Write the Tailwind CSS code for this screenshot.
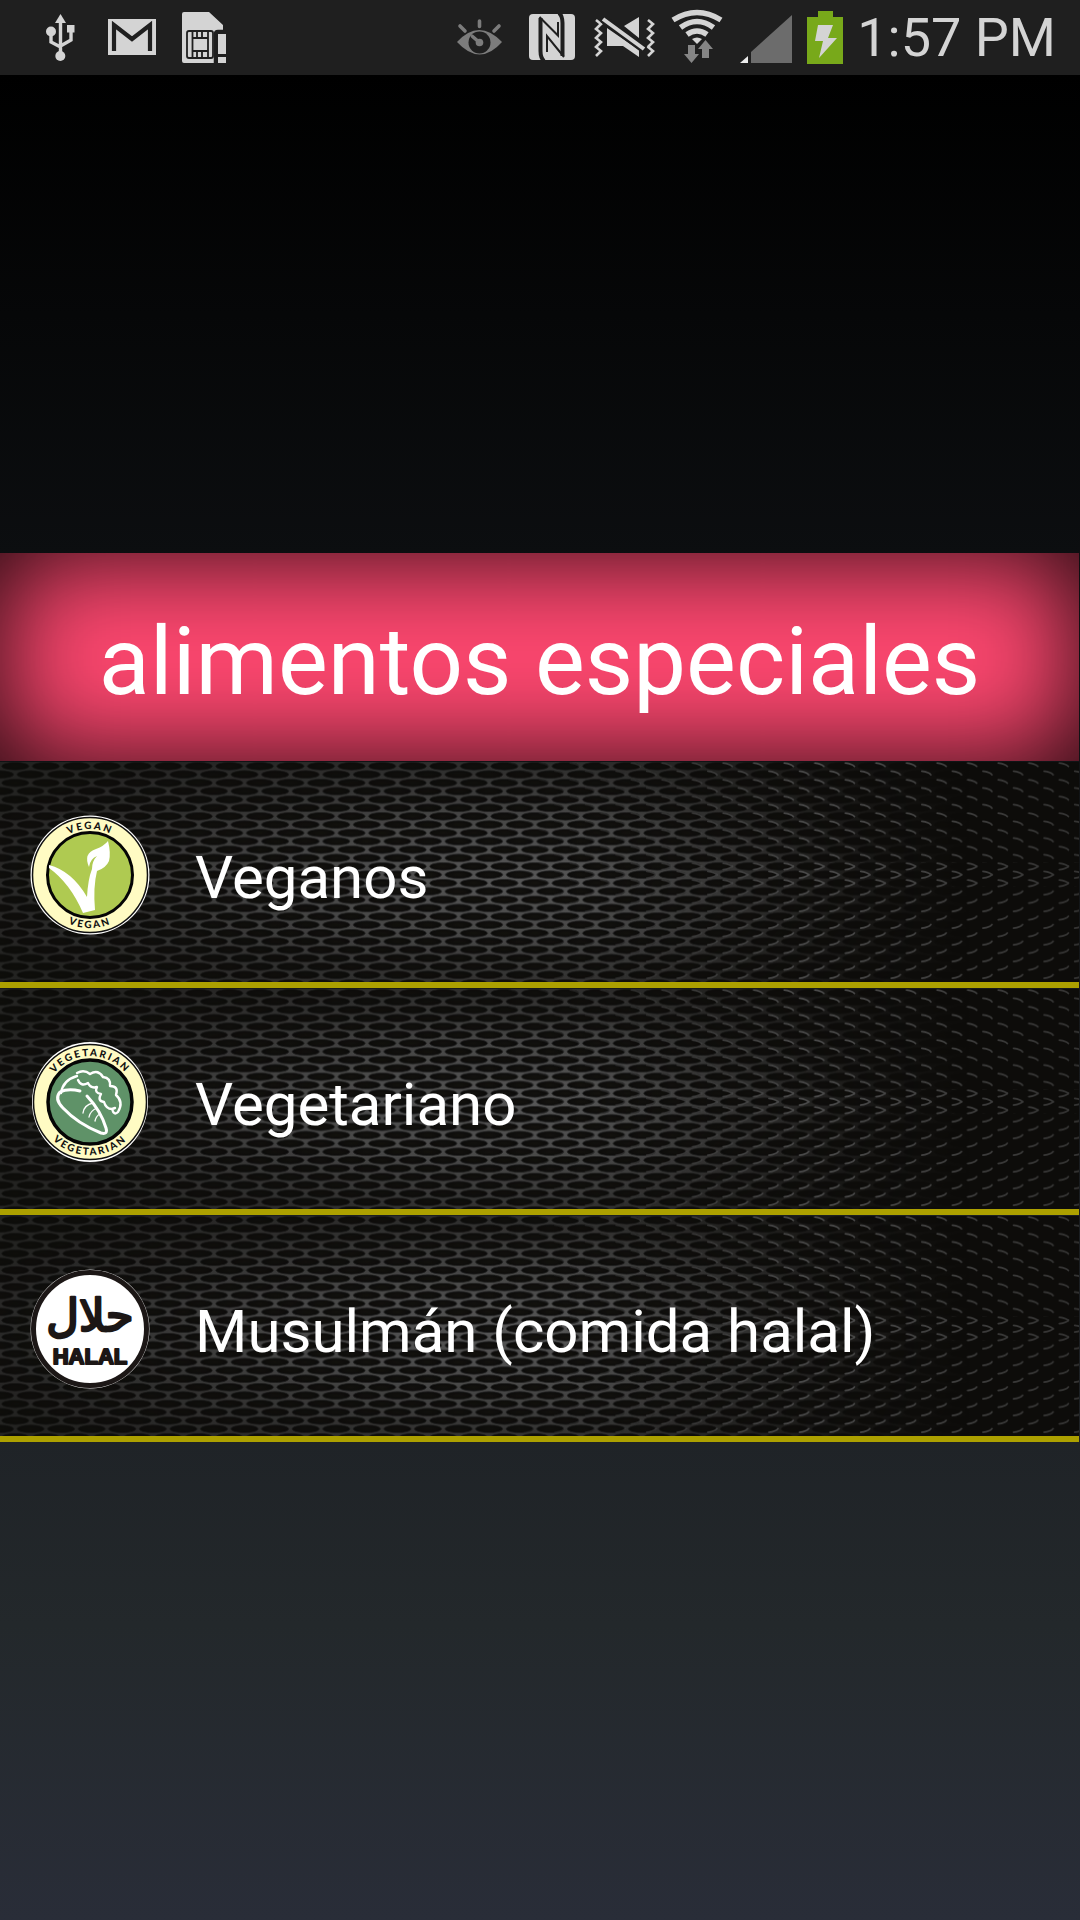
<!DOCTYPE html>
<html lang="es">
<head>
<meta charset="utf-8">
<meta name="viewport" content="width=device-width, initial-scale=1">
<title>alimentos especiales</title>
<script src="https://cdn.jsdelivr.net/npm/@tailwindcss/browser@4"></script>
</head>
<body class="flex min-h-screen flex-col bg-black font-['Roboto',sans-serif] text-white">

<!-- Shared definitions: metal grille row background and the badge lettering arcs -->
<svg class="absolute size-0" aria-hidden="true">
  <defs>
    <radialGradient id="hole"><stop offset="0" stop-color="#14130f"/><stop offset=".7" stop-color="#0f0e0c"/><stop offset="1" stop-color="#080808"/></radialGradient>
    <pattern id="mesh" width="30.6" height="16.7" patternUnits="userSpaceOnUse">
      <rect width="31" height="17" fill="#565656"/>
      <g fill="url(#hole)" stroke="#262626" stroke-width=".8">
        <ellipse cx="15.3" cy="4.2" rx="13.6" ry="3.8"/>
        <ellipse cx="0" cy="12.5" rx="13.6" ry="3.8"/>
        <ellipse cx="30.6" cy="12.5" rx="13.6" ry="3.8"/>
      </g>
    </pattern>
    <pattern id="glint-down" width="30.6" height="16.7" patternUnits="userSpaceOnUse">
      <g fill="none" stroke="#505050" stroke-width="1.7" stroke-linecap="round">
        <path d="M20 1Q27 1.800 29 4.500"/><path d="M4.700 9.300Q11.700 10.100 13.700 12.800"/>
      </g>
    </pattern>
    <pattern id="glint-up" width="30.6" height="16.7" patternUnits="userSpaceOnUse">
      <g fill="none" stroke="#505050" stroke-width="1.700" stroke-linecap="round">
        <path d="M20 7.500Q27 6.800 29 4"/><path d="M4.700 15.800Q11.700 15.100 13.700 12.300"/>
      </g>
    </pattern>
    <radialGradient id="lit" gradientUnits="userSpaceOnUse" cx="0" cy="0" r="1" gradientTransform="translate(530 115) scale(600 150)">
      <stop offset="0" stop-color="#fff"/><stop offset=".4" stop-color="#ccc"/><stop offset=".7" stop-color="#808080"/><stop offset="1" stop-color="#505050"/>
    </radialGradient>
    <linearGradient id="cut"><stop offset=".55" stop-color="#000" stop-opacity="0"/><stop offset=".9" stop-color="#000"/></linearGradient>
    <linearGradient id="side"><stop offset=".45" stop-color="#000"/><stop offset=".75" stop-color="#eee"/><stop offset="1" stop-color="#999"/></linearGradient>
    <mask id="mesh-mask"><rect width="1080" height="220" fill="url(#lit)"/><rect width="1080" height="220" fill="url(#cut)"/></mask>
    <mask id="side-mask"><rect width="1080" height="220" fill="url(#side)"/></mask>
    <symbol id="grille" viewBox="0 0 1080 220" preserveAspectRatio="none">
      <rect width="1080" height="220" fill="#0d0c0a"/>
      <rect width="1080" height="220" fill="url(#mesh)" mask="url(#mesh-mask)"/>
      <g mask="url(#side-mask)"><rect width="1080" height="125" fill="url(#glint-down)"/><rect y="100" width="1080" height="120" fill="url(#glint-up)"/></g>
    </symbol>
    <path id="arc-top" d="M14 60a46 46 0 0 1 92 0"/>
    <path id="arc-bottom" d="M7 60a53 53 0 0 0 106 0"/>
  </defs>
</svg>

<header class="flex h-[75px] items-center justify-between bg-[#1f1f1f] pr-6 pl-[46px] text-[#d4d4d4]">
  <div class="flex items-center">
    <svg class="h-[75px] w-[29px]" viewBox="46 0 29 75" fill="currentColor" role="img" aria-label="USB">
      <path d="M60.500 14l5.500 9h-11z"/><circle cx="51" cy="31.500" r="5"/><rect x="67" y="25" width="7.500" height="7.500"/><circle cx="60.300" cy="56" r="5"/>
      <path d="M60.500 20v36M51 31v11l9.500 5M71 31v9l-10.500 6" fill="none" stroke="currentColor" stroke-width="3.400"/>
    </svg>
    <svg class="ml-8 h-[75px] w-[50px]" viewBox="107 0 50 75" role="img" aria-label="Gmail">
      <rect x="108" y="19" width="48" height="36" fill="#d4d4d4"/><path d="M114 51V25l18 14 18-14v26" fill="none" stroke="#1f1f1f" stroke-width="4.200"/>
    </svg>
    <svg class="ml-6 h-[75px] w-[47px]" viewBox="181 0 47 75" role="img" aria-label="SIM">
      <path d="M184 12h25l14 13v5h-7v33h-32q-2 0-2-2V14q0-2 2-2z" fill="#d4d4d4"/>
      <g fill="none" stroke="#1f1f1f" stroke-width="1.800"><rect x="187" y="31" width="26" height="27" rx="2"/><path d="M192.500 31v27M208 31v27M192.500 38h15.500M192.500 51h15.500M197 31v7M202 31v7M197 51v7M202 51v7"/></g>
      <path d="M215 63V34q0-3 3-3h6" fill="none" stroke="#1f1f1f" stroke-width="2.500"/>
      <path d="M218 34h8v20h-8zM218 57h8v6h-8z" fill="#d4d4d4"/>
    </svg>
  </div>
  <div class="flex items-center">
    <svg class="h-[75px] w-[46px]" viewBox="457 0 46 75" role="img" aria-label="Smart stay">
      <path d="M457 42q22-24 45 0-22 25-45 0z" fill="#7c7c7c"/><circle cx="479.500" cy="42.500" r="11" fill="#1f1f1f"/><circle cx="479.500" cy="42.500" r="3.800" fill="#7c7c7c"/>
      <path d="M479.500 42.500l-7-6M460 26l5 5M479.500 21v5.500M499 26l-5 5" stroke="#7c7c7c" stroke-width="3.600" stroke-linecap="round"/>
    </svg>
    <svg class="ml-[25px] h-[75px] w-[48px]" viewBox="528 0 48 75" role="img" aria-label="NFC">
      <rect x="529" y="14" width="46" height="46" rx="4" fill="#d4d4d4"/>
      <g fill="none" stroke="#1f1f1f"><path d="M544 61q-3.500-3-3.500-10V18M559 13q3.500 3 3.500 10v33" stroke-width="4"/><path d="M539.500 17L558 35.500V22M564 57L547 36v16" stroke-width="2"/></g>
    </svg>
    <svg class="ml-[17px] h-[75px] w-[64px]" viewBox="593 0 64 75" role="img" aria-label="Vibrar">
      <path d="M596 20l5 4-5 5 5 4-5 5 5 4-5 5 5 4-5 5M648 20l5 4-5 5 5 4-5 5 5 4-5 5 5 4-5 5" fill="none" stroke="#d4d4d4" stroke-width="2.600"/>
      <path d="M607 28l32 22v7l-16-11h-16zM639 17v21l-15-12z" fill="#d4d4d4"/>
      <path d="M603 19l42 31" stroke="#1f1f1f" stroke-width="8"/><path d="M603 19l41 30" stroke="#d4d4d4" stroke-width="4"/>
    </svg>
    <svg class="ml-[13px] h-[75px] w-[54px]" viewBox="670 0 54 75" role="img" aria-label="Wi-Fi">
      <path d="M697 44l-5-5q5-3 10 0z" fill="#d4d4d4"/>
      <path d="M687 34.500q10-7 20 0M680.500 27.500q16.500-12 33 0M673 20q24-15 48 0" fill="none" stroke="#d4d4d4" stroke-width="5.600"/>
      <path d="M688 45h7v9h4l-7.500 9-7.500-9h4zM702 58h7v-9h4l-7.500-9-7.500 9h4z" fill="#858585"/>
    </svg>
    <svg class="ml-4 h-[75px] w-[52px]" viewBox="740 0 52 75" role="img" aria-label="Señal">
      <path d="M751 63V52l41-37v48z" fill="#6c6c6c"/><path d="M740 63l8-7v7z" fill="#ececec"/>
    </svg>
    <svg class="ml-[15px] h-[75px] w-[36px]" viewBox="807 0 36 75" role="img" aria-label="Batería">
      <path d="M807 17h11v-6h15v6h10v47h-36z" fill="#78a91a"/><path d="M818 25h15l-5 13h9l-18 20 4-17h-8z" fill="#d4d4d4"/>
    </svg>
    <time class="ml-[14px] text-[54px] leading-none">1:57 PM</time>
  </div>
</header>

<main class="flex grow flex-col justify-center bg-[linear-gradient(#000,#0c0e10_26%,#1f2327_74%,#23282b_84%,#292d38)]">
  <h1 class="mr-px flex h-[208px] items-center justify-center bg-[#ff4870] pt-[10px] text-[94px] leading-none shadow-[inset_0_0_110px_rgba(0,0,0,0.9)]">alimentos especiales</h1>
  <ul class="mr-px">
    <li class="border-b-6 border-[#aca000] pt-px">
      <a href="#veganos" class="relative isolate flex h-[220px] items-center gap-[45px] pt-[6px] pl-[30px] text-[60px]">
        <svg class="absolute inset-0 -z-10 size-full" aria-hidden="true"><use href="#grille"/></svg>
        <svg class="size-[120px]" viewBox="0 0 120 120" aria-hidden="true">
          <circle cx="60" cy="60" r="59.500" fill="#fff"/><circle cx="60" cy="60" r="57.500" fill="#fffbc3" stroke="#111" stroke-width="1.500"/>
          <circle cx="60" cy="60" r="42.500" fill="#afca51" stroke="#050505" stroke-width="3"/>
          <path d="M19 50Q42 56 57 82Q58 64 62 54Q62 46 67 41Q60 44 59 52Q53 38 66 34Q74 31 78 26Q81 38 79 46Q76 53 67 56Q63 72 65 95L53 98Q40 68 19 53z" fill="#fff"/>
          <g class="font-['Lato',sans-serif] text-[10px] font-black tracking-[2px]" fill="#111" text-anchor="middle">
            <text><textPath href="#arc-top" startOffset="50%">VEGAN</textPath></text>
            <text><textPath href="#arc-bottom" startOffset="50%">VEGAN</textPath></text>
          </g>
        </svg>
        <span class="pt-[6px]">Veganos</span>
      </a>
    </li>
    <li class="border-b-6 border-[#aca000] pt-px">
      <a href="#vegetariano" class="relative isolate flex h-[220px] items-center gap-[45px] pt-[6px] pl-[30px] text-[60px]">
        <svg class="absolute inset-0 -z-10 size-full" aria-hidden="true"><use href="#grille"/></svg>
        <svg class="size-[120px]" viewBox="0 0 120 120" aria-hidden="true">
          <ellipse cx="60" cy="60" rx="58" ry="60" fill="#fff"/><ellipse cx="60" cy="60" rx="56.500" ry="57.500" fill="#fffbc3" stroke="#111" stroke-width="1.500"/>
          <circle cx="60" cy="60" r="42" fill="#5f9268" stroke="#050505" stroke-width="3.500"/>
          <g fill="none" stroke="#fff" stroke-linecap="round" stroke-linejoin="round">
            <path d="M50 49Q38 46 30 50Q24 57 33 66Q48 82 71 91Q78 93 76 86Q71 69 57 54" stroke-width="3"/>
            <path d="M31 51Q33 38 47 34M47 31Q54 27 60 32Q68 27 73 35Q81 36 80 44Q89 44 86 53Q94 60 88 70Q84 74 82 67L85 66M82 67Q76 67 74 60Q67 59 71 52Q64 51 67 45Q61 47 58 41Q51 45 48 38" stroke-width="2.400"/>
            <path d="M63 61Q54 63 53 71M67 66Q60 69 59 75M70 72Q66 74 65 79" stroke-width="1.300"/>
          </g>
          <g class="font-['Lato',sans-serif] text-[10px] font-black tracking-[2px]" fill="#111" text-anchor="middle">
            <text><textPath href="#arc-top" startOffset="50%">VEGETARIAN</textPath></text>
            <text><textPath href="#arc-bottom" startOffset="50%">VEGETARIAN</textPath></text>
          </g>
        </svg>
        <span class="pt-[6px]">Vegetariano</span>
      </a>
    </li>
    <li class="border-b-6 border-[#aca000] pt-px">
      <a href="#halal" class="relative isolate flex h-[220px] items-center gap-[45px] pt-[6px] pl-[30px] text-[60px]">
        <svg class="absolute inset-0 -z-10 size-full" aria-hidden="true"><use href="#grille"/></svg>
        <svg class="size-[120px]" viewBox="0 0 120 120" aria-hidden="true">
          <circle cx="60" cy="60" r="59.500" fill="#ddd"/><circle cx="60" cy="60" r="56.500" fill="#fff" stroke="#1c1716" stroke-width="5"/>
          <g fill="#1c1716" stroke="#1c1716" stroke-linejoin="round" text-anchor="middle">
            <text x="60" y="62" class="font-['DejaVu_Sans',sans-serif] text-[45px]" stroke-width="2.500">حلال</text>
            <text x="60" y="95" class="font-['Liberation_Sans',sans-serif] text-[22px] font-bold" stroke-width="2">HALAL</text>
          </g>
        </svg>
        <span class="pt-[6px]">Musulmán (comida halal)</span>
      </a>
    </li>
  </ul>
</main>
</body>
</html>
